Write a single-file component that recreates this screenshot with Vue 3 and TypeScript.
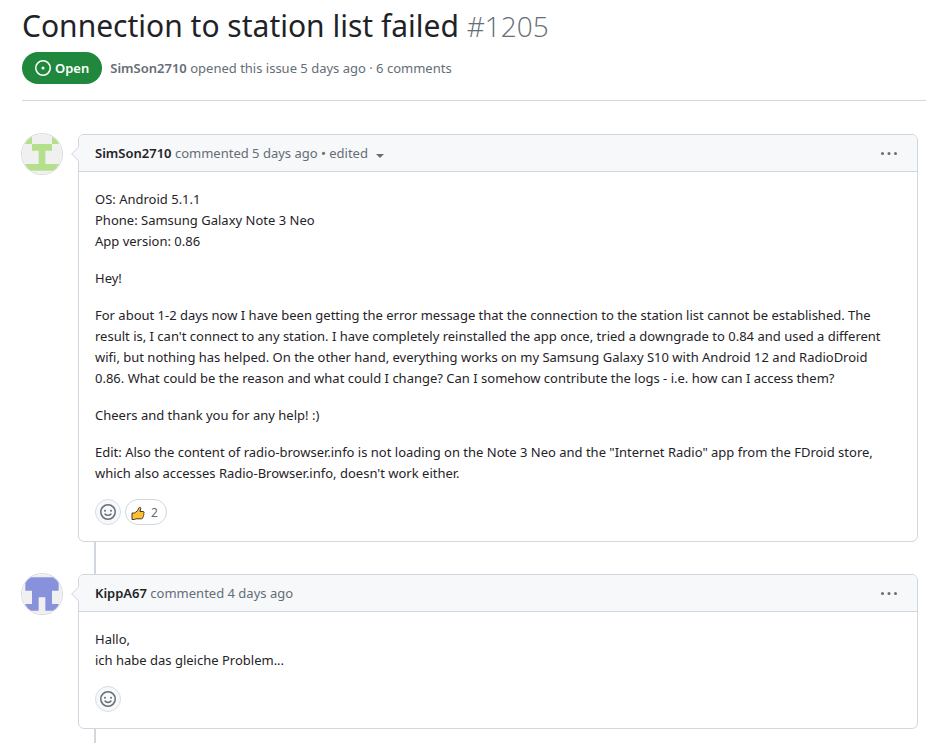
<script setup lang="ts">
type Cell = [number, number]

interface Comment {
  id: number
  author: string
  when: string
  edited: boolean
  color: string
  cells: Cell[]
  paragraphs: string[]
  thumbs: number
}

const issue = {
  title: 'Connection to station list failed',
  number: '#1205',
  author: 'SimSon2710',
  summary: 'opened this issue 5 days ago · 6 comments',
}

const comments: Comment[] = [
  {
    id: 1,
    author: 'SimSon2710',
    when: 'commented 5 days ago',
    edited: true,
    color: '#b4df8c',
    cells: [
      [0, 0], [4, 0],
      [1, 1], [2, 1], [3, 1],
      [2, 2],
      [2, 3],
      [0, 4], [1, 4], [2, 4], [3, 4], [4, 4],
    ],
    paragraphs: [
      'OS: Android 5.1.1\nPhone: Samsung Galaxy Note 3 Neo\nApp version: 0.86',
      'Hey!',
      "For about 1-2 days now I have been getting the error message that the connection to the station list cannot be established. The result is, I can't connect to any station. I have completely reinstalled the app once, tried a downgrade to 0.84 and used a different wifi, but nothing has helped. On the other hand, everything works on my Samsung Galaxy S10 with Android 12 and RadioDroid 0.86. What could be the reason and what could I change? Can I somehow contribute the logs - i.e. how can I access them?",
      'Cheers and thank you for any help! :)',
      'Edit: Also the content of radio-browser.info is not loading on the Note 3 Neo and the "Internet Radio" app from the FDroid store, which also accesses Radio-Browser.info, doesn\'t work either.',
    ],
    thumbs: 2,
  },
  {
    id: 2,
    author: 'KippA67',
    when: 'commented 4 days ago',
    edited: false,
    color: '#8892dc',
    cells: [
      [0, 0], [1, 0], [2, 0], [3, 0], [4, 0],
      [0, 1], [1, 1], [2, 1], [3, 1], [4, 1],
      [1, 2], [2, 2], [3, 2],
      [1, 3], [3, 3],
      [0, 4], [1, 4], [3, 4], [4, 4],
    ],
    paragraphs: ['Hallo,\nich habe das gleiche Problem...'],
    thumbs: 0,
  },
]

// One path for all cells, so that neighbours join without seams.
function identicon(cells: Cell[]): string {
  return cells.map(([x, y]) => `M${35 + x * 70} ${35 + y * 70}h70v70h-70Z`).join('')
}
</script>

<template>
  <main class="page">
    <header class="issue-header">
      <h1 class="title">{{ issue.title }} <span class="number">{{ issue.number }}</span></h1>
      <div class="meta">
        <span class="state">
          <svg width="16" height="16" viewBox="0 0 16 16" fill="currentColor" aria-hidden="true">
            <path d="M8 9.5a1.5 1.5 0 1 0 0-3 1.5 1.5 0 0 0 0 3Z" />
            <path d="M8 0a8 8 0 1 1 0 16A8 8 0 0 1 8 0ZM1.5 8a6.5 6.5 0 1 0 13 0 6.5 6.5 0 0 0-13 0Z" />
          </svg>
          Open
        </span>
        <span><a class="meta-author" href="#">{{ issue.author }}</a> {{ issue.summary }}</span>
      </div>
    </header>

    <section class="timeline">
      <article v-for="comment in comments" :key="comment.id" class="item">
        <a class="avatar" href="#" :aria-label="comment.author">
          <svg viewBox="0 0 420 420" aria-hidden="true">
            <rect width="420" height="420" fill="#f0f0f0" />
            <path :d="identicon(comment.cells)" :fill="comment.color" />
          </svg>
        </a>
        <div class="column">
          <div class="card">
            <svg class="pointer" width="8" height="16" viewBox="0 0 8 16" aria-hidden="true">
              <path d="M8 0 0 8l8 8Z" fill="#f6f8fa" />
              <path d="M8 .5.7 8 8 15.5" fill="none" stroke="#d0d7de" />
            </svg>
            <div class="card-header">
              <div class="byline">
                <a class="author" href="#">{{ comment.author }}</a> {{ comment.when }}
                <template v-if="comment.edited">
                  •
                  <button class="edited" type="button">edited<span class="caret"></span></button>
                </template>
              </div>
              <button class="menu" type="button" aria-label="Show options">
                <svg width="16" height="16" viewBox="0 0 16 16" fill="currentColor" aria-hidden="true">
                  <circle cx="1.5" cy="8.5" r="1.5" />
                  <circle cx="8" cy="8.5" r="1.5" />
                  <circle cx="14.5" cy="8.5" r="1.5" />
                </svg>
              </button>
            </div>
            <div class="body">
              <p v-for="(text, index) in comment.paragraphs" :key="index">{{ text }}</p>
            </div>
            <div class="reactions">
              <button class="react" type="button" aria-label="Add or remove reactions">
                <svg width="16" height="16" viewBox="0 0 16 16" aria-hidden="true">
                  <circle cx="8" cy="8" r="7.25" fill="none" stroke="currentColor" stroke-width="1.5" />
                  <circle cx="5" cy="6.8" r="1" fill="currentColor" />
                  <circle cx="11" cy="6.8" r="1" fill="currentColor" />
                  <path d="M5 10c1.3 1.9 4.7 1.900 6 0" fill="none" stroke="currentColor" stroke-width="1.4" stroke-linecap="round" />
                </svg>
              </button>
              <button v-if="comment.thumbs" class="count" type="button" aria-label="Thumbs up">
                <svg width="14" height="18" viewBox="0 0 14 18" aria-hidden="true">
                  <path
                    d="M1 10h2.500L6.500 7.800 8 4.800c.5-1 2.100-.5 1.700 1L9 8.500h3c1.200 0 1.500 1.500.6 2 .6.500.5 1.500-.2 1.800.3.800 0 1.500-.6 1.700.1 1.100-.5 1.800-1.400 1.800H5L3.500 16.500H1Z"
                    fill="#ffc02e"
                    stroke="#3d3a39"
                    stroke-linejoin="round"
                  />
                </svg>
                <span>{{ comment.thumbs }}</span>
              </button>
            </div>
          </div>
        </div>
      </article>
    </section>
  </main>
</template>

<style>
body {
  margin: 0;
  background: #fff;
}
</style>

<style scoped>
.page {
  padding: 6px 0 0 22px;
  font-family: "Noto Sans", "Open Sans", sans-serif;
  font-size: 13px;
  line-height: 21px;
  color: #1f2328;
}

a {
  color: inherit;
  text-decoration: none;
}

button {
  padding: 0;
  border: 0;
  background: none;
  color: inherit;
  font: inherit;
  cursor: pointer;
}

svg {
  display: block;
  flex: none;
}

.issue-header {
  padding-bottom: 16px;
  border-bottom: 1px solid #d0d7de;
}

.title {
  margin: 0 0 6px;
  font-size: 30px;
  line-height: 40px;
  font-weight: 400;
}

.number {
  font-family: "Open Sans", sans-serif;
  font-size: 28px;
  font-weight: 300;
  color: #656d76;
}

.meta {
  display: flex;
  align-items: center;
  gap: 8px;
  color: #656d76;
}

.state {
  display: flex;
  align-items: center;
  gap: 4px;
  padding: 0 13px;
  border-radius: 16px;
  background: #1f883d;
  color: #fff;
  font-weight: 600;
  line-height: 32px;
}

.meta-author {
  font-weight: 600;
}

.timeline {
  padding: 33px 8px 0 0;
}

.item {
  display: flex;
  gap: 16px;
}

.avatar {
  flex: none;
  width: 40px;
  height: 40px;
  overflow: hidden;
  border-radius: 50%;
  box-shadow: 0 0 0 1px #d8dade;
}

.column {
  flex: 1;
  min-width: 0;
  padding-bottom: 32px;
  background: linear-gradient(#d0d7de, #d0d7de) 16px 0 / 2px 100% no-repeat;
}

.card {
  position: relative;
  border: 1px solid #d0d7de;
  border-radius: 6px;
  background: #fff;
}

.pointer {
  position: absolute;
  top: 11px;
  left: -8px;
}

.card-header {
  display: flex;
  align-items: center;
  justify-content: space-between;
  padding: 8px 20px 8px 16px;
  border-bottom: 1px solid #d0d7de;
  border-radius: 5px 5px 0 0;
  background: #f6f8fa;
  color: #656d76;
  line-height: 20px;
}

.author {
  font-weight: 600;
  color: #1f2328;
}

.caret {
  display: inline-block;
  margin-left: 8px;
  border: 4px solid transparent;
  border-top-color: currentColor;
  border-bottom: 0;
}

.body {
  display: flex;
  flex-direction: column;
  gap: 16px;
  padding: 17px 24px 15px 16px;
}

.body p {
  margin: 0;
  white-space: pre-line;
}

.reactions {
  display: flex;
  gap: 4px;
  padding: 0 16px 16px;
}

.react {
  display: grid;
  place-items: center;
  width: 26px;
  height: 26px;
  border: 1px solid #d8dee4;
  border-radius: 50%;
  background: #f6f8fa;
  color: #656d76;
}

.count {
  display: flex;
  align-items: center;
  gap: 6px;
  height: 26px;
  padding: 0 8px 0 5px;
  border: 1px solid #d0d7de;
  border-radius: 13px;
  color: #656d76;
  font-size: 12px;
}
</style>
